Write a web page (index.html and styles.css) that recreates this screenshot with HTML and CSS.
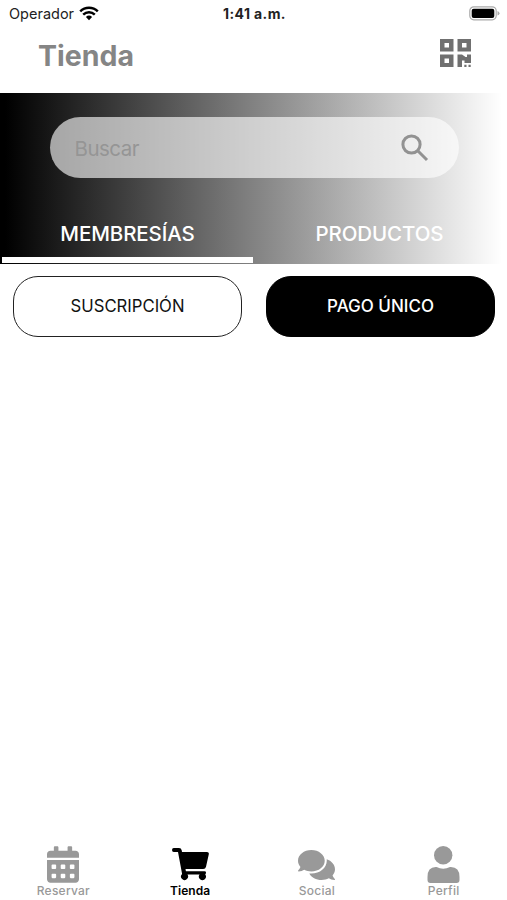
FILE: index.html
```html
<!DOCTYPE html>
<html lang="es">
<head>
<meta charset="utf-8">
<title>Tienda</title>
<link rel="stylesheet" href="styles.css">
</head>
<body>
<div class="status">
  <div class="carrier"><span>Operador</span>
    <svg class="wifi" viewBox="0 0 20 15"><path d="M10 14.2 6.9 11a4.6 4.6 0 0 1 6.2 0z"/><path d="M1.2 5.3a12.8 12.8 0 0 1 17.6 0M4.2 8.6a8.5 8.5 0 0 1 11.6 0" fill="none" stroke="#000" stroke-width="2.5"/></svg>
  </div>
  <time>1:41 a.m.</time>
  <svg class="battery" viewBox="0 0 31 15"><rect x=".8" y=".8" width="26.4" height="13" rx="4" fill="#fff" stroke="#aaa" stroke-width="1.2"/><rect x="2.7" y="2.7" width="22.6" height="9.2" rx="2"/><path d="M28.5 5q2 .7 2 2.3t-2 2.3z" fill="#aaa"/></svg>
</div>
<header class="header">
  <h1>Tienda</h1>
  <svg class="qr" viewBox="0 0 31 28"><path fill-rule="evenodd" d="M0 0h13.500v12.500H0zM4.500 4v4.500H9V4zM17.500 0H31v12.500H17.500zM22 4v4.500h4.500V4zM0 15.500h13.500V28H0zM4.500 19.500V24H9v-4.500zM17.500 15.500h4.500l3.500 2.500h1.500v-2.500h4V24h-6.500v-2.500h-2.500V28h-4.500zM24.300 25.800h2.200V28h-2.200zM28.500 25.800h2.200V28h-2.200z"/></svg>
</header>
<section class="hero">
  <div class="search"><span>Buscar</span>
    <svg viewBox="0 0 28 28"><circle cx="10.500" cy="10.500" r="8.600"/><path d="m17 17 9 9"/></svg>
  </div>
  <nav class="tabs"><a class="on">MEMBRESÍAS</a><a>PRODUCTOS</a></nav>
</section>
<div class="options"><button class="outline">SUSCRIPCIÓN</button><button class="solid">PAGO ÚNICO</button></div>
<nav class="bottom">
  <a><svg width="32" height="37" viewBox="0 0 448 512"><path d="M0 464c0 26.500 21.500 48 48 48h352c26.500 0 48-21.500 48-48V192H0zM320 268c0-6.600 5.400-12 12-12h40c6.600 0 12 5.400 12 12v40c0 6.600-5.400 12-12 12h-40c-6.600 0-12-5.400-12-12zm0 128c0-6.600 5.400-12 12-12h40c6.600 0 12 5.400 12 12v40c0 6.600-5.400 12-12 12h-40c-6.600 0-12-5.400-12-12zM192 268c0-6.600 5.400-12 12-12h40c6.600 0 12 5.400 12 12v40c0 6.600-5.400 12-12 12h-40c-6.600 0-12-5.400-12-12zm0 128c0-6.600 5.400-12 12-12h40c6.600 0 12 5.400 12 12v40c0 6.600-5.400 12-12 12h-40c-6.600 0-12-5.400-12-12zM64 268c0-6.600 5.400-12 12-12h40c6.600 0 12 5.400 12 12v40c0 6.600-5.400 12-12 12H76c-6.600 0-12-5.400-12-12zm0 128c0-6.600 5.400-12 12-12h40c6.600 0 12 5.400 12 12v40c0 6.600-5.400 12-12 12H76c-6.600 0-12-5.400-12-12zM400 64h-48V16c0-8.800-7.200-16-16-16h-32c-8.800 0-16 7.200-16 16v48H160V16c0-8.800-7.200-16-16-16h-32c-8.800 0-16 7.200-16 16v48H48C21.500 64 0 85.500 0 112v48h448v-48c0-26.500-21.500-48-48-48z"/></svg><span>Reservar</span></a>
  <a class="active"><svg class="cart" width="37" height="33" viewBox="0 0 37 33"><path d="M1.800 0H7q2.200 0 2.700 2.300l.3 1.700h25q2.200 0 1.800 2.200l-2.800 12.600q-.5 2.200-2.800 2.200H13.500l.4 2.200h18.600q1.600 0 1.500 1.600-.1 1.200-.8 1.700a3.500 3.500 0 1 1-5.600 0H15.400a3.500 3.500 0 1 1-5.300-.5L6 4H1.800Q0 4 0 2t1.800-2z"/></svg><span>Tienda</span></a>
  <a><svg class="chat" width="37" height="30" viewBox="0 32 576 448" preserveAspectRatio="none"><path d="M416 192c0-88.400-93.100-160-208-160S0 103.600 0 192c0 34.300 14.100 65.900 38 92-13.400 30.200-35.500 54.200-35.800 54.500-2.200 2.300-2.800 5.700-1.500 8.700S4.800 352 8 352c36.600 0 66.900-12.300 88.700-25 32.200 15.700 70.300 25 111.300 25 114.900 0 208-71.600 208-160zm122 220c23.900-26 38-57.700 38-92 0-66.900-53.500-124.200-129.300-148.100.9 6.600 1.300 13.300 1.300 20.100 0 105.900-107.700 192-240 192-10.800 0-21.300-.8-31.700-1.900C207.800 439.600 281.800 480 368 480c41 0 79.100-9.200 111.300-25 21.800 12.700 52.100 25 88.700 25 3.200 0 6.100-1.900 7.300-4.800 1.300-2.900.7-6.300-1.500-8.700-.3-.3-22.400-24.200-35.800-54.500z"/></svg><span>Social</span></a>
  <a><svg width="33" height="37" viewBox="0 0 33 37"><circle cx="16.200" cy="9.200" r="9.200"/><path d="M9.500 21q6.700 3.400 13.500 0Q32.500 20.500 32.500 31v3q0 3-3 3h-26q-3 0-3-3v-3Q.5 20.500 9.500 21z"/></svg><span>Perfil</span></a>
</nav>
</body>
</html>
```
FILE: styles.css
```css
* { box-sizing: border-box; }
body { margin: 0; height: 900px; display: flex; flex-direction: column; background: #fff; font-family: Inter, "Liberation Sans", sans-serif; overflow: hidden; }
.status { height: 27px; display: grid; grid-template-columns: 1fr auto 1fr; align-items: center; padding: 0 7px 1px 9px; font-size: 14.5px; color: #222; }
.carrier { display: flex; align-items: center; gap: 5px; }
.wifi { width: 20px; height: 15px; }
.status time { font-weight: 700; font-size: 14px; letter-spacing: .4px; }
.battery { width: 31px; height: 15px; justify-self: end; }
.header { height: 66px; display: flex; justify-content: space-between; align-items: flex-start; padding: 12px 36px 0 38px; }
h1 { margin: 0; font-size: 28.5px; line-height: 34px; font-weight: 700; color: #858585; }
.qr { width: 31px; height: 28px; fill: #707070; }
.hero { height: 170.500px; padding-top: 24px; background: linear-gradient(90deg, #000 1%, #828282 50%, #fff 99%); }
.search { width: 409px; height: 61px; margin-left: 49.500px; padding: 0 30px 0 25px; border-radius: 31px; background: rgba(255,255,255,.62); display: flex; justify-content: space-between; align-items: center; color: #959595; font-size: 21px; }
.search span { font-size: 20.500px; letter-spacing: -.5px; padding-top: 2px; }
.search svg { width: 28px; height: 28px; fill: none; stroke: #929292; stroke-width: 3; }
.tabs { display: flex; height: 85px; padding: 0 1px 0 2px; }
.tabs a { flex: 1; display: flex; justify-content: center; align-items: center; padding-top: 32px; border-bottom: 6px solid transparent; color: #fff; font-size: 20.500px; letter-spacing: -.1px; font-weight: 500; }
.tabs .on { flex: 0 0 251px; border-color: #fff; }
.options { display: flex; gap: 24px; padding: 12px 12px 0 13px; }
button { flex: 1; height: 61px; border: 1.500px solid #222; border-radius: 25px; font: 400 16.700px Inter, sans-serif; background: #fff; color: #111; padding: 0; }
.solid { background: #000; border-color: #000; color: #fff; font-size: 17px; font-weight: 500; }
.bottom { margin-top: auto; height: 58px; display: flex; padding-bottom: 2px; }
.bottom a { flex: 1; display: flex; flex-direction: column; justify-content: flex-end; align-items: center; color: #999; font-size: 12px; line-height: 14px; font-weight: 500; letter-spacing: .25px; }
.bottom svg { fill: currentColor; margin-bottom: 1px; }
.bottom .cart { margin-bottom: 3px; }
.bottom .chat { margin-bottom: 4px; }
.bottom .active { color: #000; font-weight: 600; letter-spacing: .1px; }
```
